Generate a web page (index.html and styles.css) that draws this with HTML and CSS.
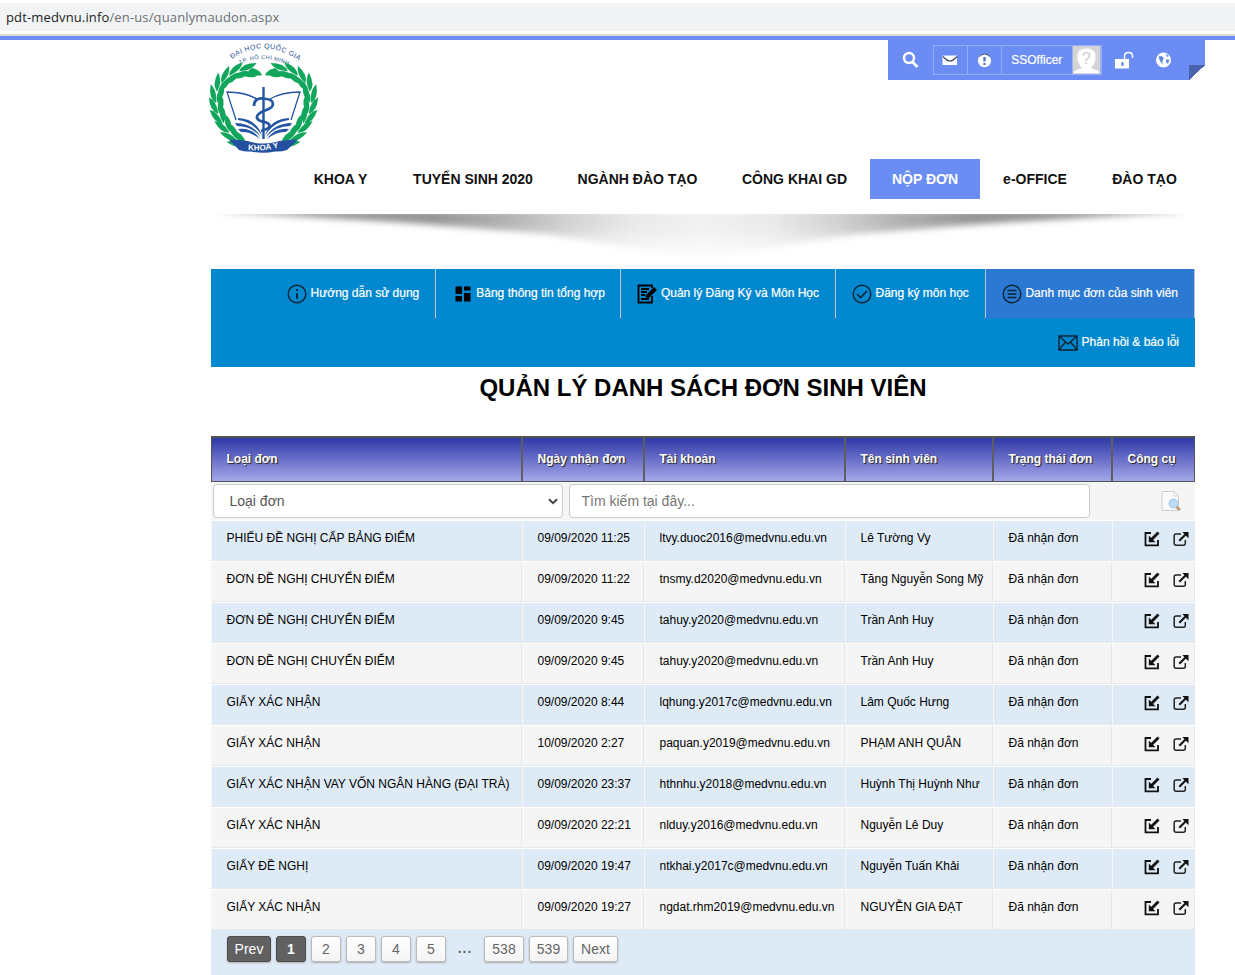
FILE: index.html
```html
<!DOCTYPE html>
<html lang="vi">
<head>
<meta charset="utf-8">
<title>Quản lý danh sách đơn sinh viên</title>
<link rel="stylesheet" href="styles.css">
</head>
<body>
<svg class="defs" aria-hidden="true">
  <symbol id="in" viewBox="0 0 16 16"><path d="M7 2H1.500V14.300H14V9" fill="none" stroke="#111" stroke-width="1.800"/><path d="M14.500 1.500L7 9" stroke="#111" stroke-width="2.800"/><path d="M4.800 4.500V11.200H11.500Z" fill="#111"/></symbol>
  <symbol id="out" viewBox="0 0 16 16"><path d="M8 3H3Q1.200 3 1.200 4.800V12.500Q1.200 14.200 3 14.200H10.500Q12.300 14.200 12.300 12.500V9" fill="none" stroke="#222" stroke-width="1.500"/><path d="M6.300 9.700L12.500 3.500" stroke="#111" stroke-width="2"/><path d="M9.300 1H15.500V7.200Z" fill="#111"/></symbol>
</svg>
<div class="address"><span class="host">pdt-medvnu.info</span>/en-us/quanlymaudon.aspx</div>
<div class="page">
  <header class="top">
    <svg class="logo" width="120" height="118" viewBox="0 0 120 118">
      <defs>
        <path id="arc1" d="M29 19Q60 -3 95 20"/>
        <path id="arc2" d="M37 24.500Q60 13 86 25.500"/>
        <path id="arc3" d="M45 110Q60 111.500 77 107.500"/>
        <g id="pair" fill="#12a65c"><path d="M-2 0Q2-8 16-7Q11 0 0 0Z"/><path d="M-2 1Q8-2 16 6Q6 9.500-2 1Z"/></g>
        <g id="branch">
          <use href="#pair" transform="translate(41 104) rotate(-150)"/>
          <use href="#pair" transform="translate(33 99) rotate(-134)"/>
          <use href="#pair" transform="translate(25.500 91) rotate(-121)"/>
          <use href="#pair" transform="translate(19 82) rotate(-112)"/>
          <use href="#pair" transform="translate(15 72) rotate(-98)"/>
          <use href="#pair" transform="translate(13 61) rotate(-84)"/>
          <use href="#pair" transform="translate(15 50) rotate(-66)"/>
          <use href="#pair" transform="translate(20 42) rotate(-46)"/>
          <use href="#pair" transform="translate(28 35) rotate(-24)"/>
          <use href="#pair" transform="translate(38 31) rotate(-4)"/>
          <path d="M49 28Q57 30 59 35Q52 37 45 31Z" fill="#12a65c"/>
        </g>
      </defs>
      <text class="logo-text"><textPath href="#arc1" textLength="72">ĐẠI HỌC QUỐC GIA</textPath></text>
      <text class="logo-text small"><textPath href="#arc2" textLength="50">TP. HỒ CHÍ MINH</textPath></text>
      <use href="#branch"/><use href="#branch" transform="matrix(-1 0 0 1 121 0)"/>
      <g fill="none" stroke="#2454a3" stroke-width="1.300">
        <path d="M33 80L24 52Q42 52 54 59M88 80L97 52Q79 52 67 59"/>
      </g>
      <g fill="#2454a3">
        <path d="M35 78Q54 79 59 96Q51 82 35 80Z"/><path d="M86 78Q67 79 62 96Q70 82 86 80Z"/>
        <path d="M32 83Q50 83 58 97Q48 86 34 86Z"/><path d="M89 83Q71 83 63 97Q73 86 87 86Z"/>
        <path d="M35 89Q49 87 57 99Q47 91 38 92Z"/><path d="M86 89Q72 87 64 99Q74 91 83 92Z"/>
      </g>
      <g fill="none" stroke="#2454a3">
        <path d="M60.500 47V99" stroke-width="2.400"/>
        <path d="M51 66Q51 58 60 58.500Q70 59 70 64Q70 68 62 70.500Q53 74 54 78Q55 81 62 82Q68 84 66 87Q65 89 58 91" stroke-width="2.700"/>
      </g>
      <path d="M26 99.500Q43 100 48 102Q60 105 73 102Q78 100 95 99.500L84 110Q78 112 72 111.500Q60 114 48 111.500Q42 112 36 110Z" fill="#23509f"/>
      <text class="logo-name"><textPath href="#arc3" textLength="31">KHOA Y</textPath></text>
    </svg>
    <div class="tools">
      <svg class="search" width="18" height="18" viewBox="0 0 18 18"><circle cx="7" cy="7" r="5" fill="none" stroke="#fff" stroke-width="2.400"/><path d="M10.500 11L15.500 16" stroke="#fff" stroke-width="2.800"/></svg>
      <div class="box">
        <span class="cell"><svg width="16" height="12" viewBox="0 0 16 12"><path d="M.5 1.500H15V11H.5Z" fill="#fff"/><path d="M1 2.500Q5 7 8 7Q11 7 15 2.500" fill="none" stroke="#35405c" stroke-width="1.200"/></svg></span>
        <span class="cell"><svg width="16" height="16" viewBox="0 0 16 16"><circle cx="8.500" cy="8.700" r="6.600" fill="#fff"/><path d="M3.500 4.500Q8.500-.5 13.500 4.500" fill="none" stroke="#41507a"/><path d="M8.500 5V9.500M8.500 11V13" stroke="#506fc5" stroke-width="2.300"/></svg></span>
        <span class="user">SSOfficer</span>
        <svg class="avatar" width="29" height="28" viewBox="0 0 29 29"><path fill="#d4d4d4" d="M0 0H29V29H0Z"/><path d="M1 28Q3 24 10 23Q5 18 5 11Q5 2.500 14.500 2.500Q24 2.500 24 11Q24 18 19 23Q26 24 28 28Z" fill="#fff"/><text x="9.500" y="18.500" font-size="17" fill="#ccc">?</text></svg>
      </div>
      <svg class="lock" width="20" height="18" viewBox="0 0 20 18"><path d="M0 8H14V17.500H0Z" fill="#fff"/><path d="M9.500 8V5Q9.500 1.500 13.500 1.500Q17.500 1.500 17.500 5V7" fill="none" stroke="#fff" stroke-width="1.400"/><path d="M7.500 11V15" stroke="#587bdd" stroke-width="2"/></svg>
      <svg class="globe" width="16" height="16" viewBox="0 0 16 16"><circle cx="7.500" cy="8" r="7.500" fill="#fff"/><path d="M2.500 4.500L5.500 4L8 6L6.500 8.500L6.500 12.500L4 9ZM9.500 1.500L13 4L11 5ZM10 7.500L13.500 7.500L12 12L10 10Z" fill="#6287e7"/></svg>
      <span class="fold"></span>
    </div>
  </header>
  <nav class="menu">
    <a>KHOA Y</a><a>TUYỂN SINH 2020</a><a>NGÀNH ĐÀO TẠO</a><a>CÔNG KHAI GD</a><a class="on">NỘP ĐƠN</a><a>e-OFFICE</a><a>ĐÀO TẠO</a>
  </nav>
  <svg class="shade" width="984" height="55" viewBox="0 0 984 55">
    <defs>
      <linearGradient id="sg"><stop offset="0" stop-color="#777" stop-opacity=".5"/><stop offset=".1" stop-color="#777" stop-opacity=".8"/><stop offset=".22" stop-color="#777" stop-opacity=".8"/><stop offset=".3" stop-color="#808080" stop-opacity=".62"/><stop offset=".36" stop-color="#888" stop-opacity=".4"/><stop offset=".43" stop-color="#999" stop-opacity=".22"/><stop offset=".5" stop-color="#999" stop-opacity=".15"/><stop offset=".57" stop-color="#999" stop-opacity=".22"/><stop offset=".64" stop-color="#888" stop-opacity=".4"/><stop offset=".7" stop-color="#808080" stop-opacity=".62"/><stop offset=".78" stop-color="#777" stop-opacity=".8"/><stop offset=".9" stop-color="#777" stop-opacity=".8"/><stop offset="1" stop-color="#777" stop-opacity=".5"/></linearGradient>
      <linearGradient id="vm" x2="0" y2="1"><stop offset="0" stop-color="#fff"/><stop offset=".3" stop-color="#ddd"/><stop offset="1" stop-color="#000"/></linearGradient>
      <mask id="sm"><path d="M0 0H984V50H0Z" fill="url(#vm)"/></mask>
      <filter id="sb" x="-5%" y="-50%" width="110%" height="200%"><feGaussianBlur stdDeviation="6 3"/></filter>
    </defs>
    <g mask="url(#sm)"><path d="M14-3V-1Q180 6 340 21Q420 34 491 46Q562 34 642 21Q802 6 968-1V-3Z" fill="url(#sg)" filter="url(#sb)"/></g>
  </svg>
  <nav class="sub">
    <a class="far"><svg width="20" height="20" viewBox="0 0 20 20"><circle cx="10" cy="10" r="8.800"/><path d="M10 9V15M10 5V7" stroke-width="1.800"/></svg>Hướng dẫn sử dụng</a>
    <a class="shift"><svg width="20" height="20" viewBox="0 0 20 20"><path d="M2.500 2.500H9V10H2.500ZM11 2.500H17.500V6.500H11ZM2.500 12H9V17.500H2.500ZM11 9H17.500V17.500H11Z" fill="#000" stroke="none"/></svg>Bảng thông tin tổng hợp</a>
    <a class="wide far"><svg width="20" height="20" viewBox="0 0 20 20"><path d="M15 12V18.500H1.500V1.500H15V4M4 5H12M4 8H10M4 11H8M4 15H12" stroke="#000" stroke-width="1.800"/><path d="M9.500 13.500L18.500 4.500" stroke="#000" stroke-width="4"/></svg>Quản lý Đăng Ký và Môn Học</a>
    <a class="wide"><svg width="20" height="20" viewBox="0 0 20 20"><circle cx="10" cy="10" r="8.800"/><path d="M5 10L8.500 13.500L15 7" stroke-width="1.600"/></svg>Đăng ký môn học</a>
    <a class="on"><svg width="20" height="20" viewBox="0 0 20 20"><circle cx="10" cy="10" r="8.800"/><path d="M5.500 6.500H14.500M5.500 10H14.500M5.500 13.500H14.500" stroke-width="1.600"/></svg>Danh mục đơn của sinh viên</a>
    <a class="last far"><svg width="20" height="20" viewBox="0 0 20 20"><path d="M1 3H19V17H1ZM1 3L10 11L19 3M1 17L7.500 9M19 17L12.500 9"/></svg>Phản hồi &amp; báo lỗi</a>
  </nav>
  <h1>QUẢN LÝ DANH SÁCH ĐƠN SINH VIÊN</h1>
  <div class="row head"><b>Loại đơn</b><b>Ngày nhận đơn</b><b>Tài khoản</b><b>Tên sinh viên</b><b>Trạng thái đơn</b><b>Công cụ</b></div>
  <div class="filter">
    <div class="field select">Loại đơn<svg width="10" height="7" viewBox="0 0 10 7"><path d="M1 1.200L5 5.200L9 1.200" fill="none" stroke="#444" stroke-width="2"/></svg></div>
    <div class="field query">Tìm kiếm tại đây...</div>
    <span class="find"><svg width="20" height="20" viewBox="0 0 20 20"><path d="M1 .5H13L17.500 5V19.500H1Z" fill="#fafafa" stroke="#c9cdd1"/><path d="M13 .5V5H17.500" fill="none" stroke="#d5d8db"/><circle cx="12.500" cy="12.500" r="4.500" fill="#b9dcf5" stroke="#a4c6e4"/><path d="M15.500 16L19 19" stroke="#bd9468" stroke-width="2.500"/></svg></span>
  </div>
  <div class="row"><span>PHIẾU ĐỀ NGHỊ CẤP BẢNG ĐIỂM</span><span>09/09/2020 11:25</span><span>ltvy.duoc2016@medvnu.edu.vn</span><span>Lê Tường Vy</span><span>Đã nhận đơn</span><span class="acts"><svg><use href="#in"/></svg><svg><use href="#out"/></svg></span></div>
  <div class="row"><span>ĐƠN ĐỀ NGHỊ CHUYỂN ĐIỂM</span><span>09/09/2020 11:22</span><span>tnsmy.d2020@medvnu.edu.vn</span><span>Tăng Nguyễn Song Mỹ</span><span>Đã nhận đơn</span><span class="acts"><svg><use href="#in"/></svg><svg><use href="#out"/></svg></span></div>
  <div class="row"><span>ĐƠN ĐỀ NGHỊ CHUYỂN ĐIỂM</span><span>09/09/2020 9:45</span><span>tahuy.y2020@medvnu.edu.vn</span><span>Trần Anh Huy</span><span>Đã nhận đơn</span><span class="acts"><svg><use href="#in"/></svg><svg><use href="#out"/></svg></span></div>
  <div class="row"><span>ĐƠN ĐỀ NGHỊ CHUYỂN ĐIỂM</span><span>09/09/2020 9:45</span><span>tahuy.y2020@medvnu.edu.vn</span><span>Trần Anh Huy</span><span>Đã nhận đơn</span><span class="acts"><svg><use href="#in"/></svg><svg><use href="#out"/></svg></span></div>
  <div class="row"><span>GIẤY XÁC NHẬN</span><span>09/09/2020 8:44</span><span>lqhung.y2017c@medvnu.edu.vn</span><span>Lâm Quốc Hưng</span><span>Đã nhận đơn</span><span class="acts"><svg><use href="#in"/></svg><svg><use href="#out"/></svg></span></div>
  <div class="row"><span>GIẤY XÁC NHẬN</span><span>10/09/2020 2:27</span><span>paquan.y2019@medvnu.edu.vn</span><span>PHẠM ANH QUÂN</span><span>Đã nhận đơn</span><span class="acts"><svg><use href="#in"/></svg><svg><use href="#out"/></svg></span></div>
  <div class="row"><span>GIẤY XÁC NHẬN VAY VỐN NGÂN HÀNG (ĐẠI TRÀ)</span><span>09/09/2020 23:37</span><span>hthnhu.y2018@medvnu.edu.vn</span><span>Huỳnh Thị Huỳnh Như</span><span>Đã nhận đơn</span><span class="acts"><svg><use href="#in"/></svg><svg><use href="#out"/></svg></span></div>
  <div class="row"><span>GIẤY XÁC NHẬN</span><span>09/09/2020 22:21</span><span>nlduy.y2016@medvnu.edu.vn</span><span>Nguyễn Lê Duy</span><span>Đã nhận đơn</span><span class="acts"><svg><use href="#in"/></svg><svg><use href="#out"/></svg></span></div>
  <div class="row"><span>GIẤY ĐỀ NGHỊ</span><span>09/09/2020 19:47</span><span>ntkhai.y2017c@medvnu.edu.vn</span><span>Nguyễn Tuấn Khải</span><span>Đã nhận đơn</span><span class="acts"><svg><use href="#in"/></svg><svg><use href="#out"/></svg></span></div>
  <div class="row"><span>GIẤY XÁC NHẬN</span><span>09/09/2020 19:27</span><span>ngdat.rhm2019@medvnu.edu.vn</span><span>NGUYỄN GIA ĐẠT</span><span>Đã nhận đơn</span><span class="acts"><svg><use href="#in"/></svg><svg><use href="#out"/></svg></span></div>
  <div class="pager"><a class="dark w44">Prev</a><a class="dark cur">1</a><a>2</a><a>3</a><a>4</a><a>5</a><i>...</i><a class="w40">538</a><a class="w39">539</a><a class="w45">Next</a></div>
</div>
</body>
</html>
```
FILE: styles.css
```css
* { box-sizing: border-box; }
body { margin: 0; height: 975px; overflow: hidden; background: #fff; color: #000; font-family: "Liberation Sans", Arial, sans-serif; font-size: 12px; }
.defs { display: none; }
.address { height: 40px; padding: 6px 6px 0; border-bottom: 4px solid #6b8cf2; font: 13px/23px "Open Sans", "Noto Sans", sans-serif; letter-spacing: .14px; color: #6c7074; background: linear-gradient(#fff 3px, #f1f3f4 3px, #f1f3f4 31px, #fff 31px, #fff 34px, #dcdcdc 34px); }
.host { color: #222; }
.page { width: 984px; margin-left: 211px; }
.top { display: flex; justify-content: space-between; height: 119px; margin: 0 -10px 0 -8px; }
.logo { display: block; }
.logo-text { font: 7px "Liberation Sans", sans-serif; fill: #2c5196; }
.logo-text.small { font-size: 5.5px; }
.logo-name { font: bold 8px "Liberation Sans", sans-serif; fill: #fff; }
.tools { position: relative; display: flex; width: 317px; height: 40px; background: #6b8cf2; color: #fff; }
.search { margin: 11px 0 0 14px; }
.box { display: flex; width: 169px; height: 30px; margin: 5px 0 0 13px; border: 1px solid #92adfb; }
.cell { display: flex; align-items: center; justify-content: center; width: 34px; border-right: 1px solid #92adfb; }
.user { width: 71px; text-align: center; line-height: 28px; -webkit-text-stroke: .2px #fff; }
.avatar { flex: none; width: 29px; height: 28px; }
.lock { margin: 11px 0 0 13px; }
.globe { margin: 12px 0 0 21px; }
.fold { position: absolute; right: 0; bottom: 0; width: 16px; height: 15px; background: linear-gradient(137deg, #4a61ab 50%, #fff 51%); }
.menu { display: grid; grid-template-columns: 99px 166px 163px 151px 110px 110px 109px; height: 40px; margin: 0 -5px 0 80px; font-weight: bold; font-size: 14px; color: #111; }
.menu a { display: flex; align-items: center; justify-content: center; white-space: nowrap; }
.menu .on { background: #6b8cf2; color: #fff; }
.shade { display: block; margin-top: 15px; }
.sub { display: flex; flex-wrap: wrap; justify-content: flex-end; height: 98px; background: #0288cf; color: #fff; }
.sub a { display: flex; align-items: flex-start; gap: 3px; height: 49px; padding: 15px 16px 0 16px; border-right: 1px solid #bfc5ce; line-height: 18px; white-space: nowrap; -webkit-text-stroke: .2px #fff; }
.sub svg { flex: none; fill: none; stroke: #0b2434; stroke-width: 1.4; }
.sub .wide { padding-right: 16.5px; }
.sub .far { gap: 4px; }
.sub .shift { padding: 15px 15px 0 17px; }
.sub .on { background: #2b79d2; }
.sub .last { border: 0; }
h1 { height: 69px; margin: 0; padding-top: 6px; text-align: center; font-size: 24px; line-height: 30px; color: #000; }
.row { display: grid; grid-template-columns: 311px 122px 201px 148px 119px 83px; height: 41px; background: #f5f5f5; border-top: 1px solid #fff; border-bottom: 1px solid #e6e8ea; }
.row:nth-child(even) { background: #deebf7; }
.row span { border-left: 1px solid #f5f8fa; border-right: 1px solid #e4e7ea; padding: 9px 0 0 14.5px; line-height: 16px; white-space: nowrap; }
.row .acts { display: flex; padding: 10px 0 0 31px; gap: 13px; }
.acts svg { width: 16px; height: 16px; }
.row.head { height: 46px; border: 1px solid #52544f; border-top: 2px solid #52544f; background: linear-gradient(#303aa7, #7074cb 55%, #a3a8eb); color: #fff; }
.head b { padding-left: 14.5px; line-height: 42px; border-right: 2px solid #5d5f5e; text-shadow: 1px 1px 1px #222; }
.head b:last-child { border: 0; }
.filter { display: flex; height: 38px; padding: 2px; background: #f5f5f5; }
.field { height: 34px; border: 1px solid #ccc; border-radius: 4px; background: #fff; color: #555; font-size: 14px; line-height: 32px; }
.select { display: flex; justify-content: space-between; align-items: center; width: 350px; padding: 0 4px 0 15.5px; }
.query { width: 521px; margin-left: 6px; padding-left: 11.5px; color: #777; }
.find { padding: 7px 0 0 71px; }
.pager { display: flex; gap: 5px; height: 45px; padding: 6px 16px; background: #deebf7; font-size: 14px; color: #666; }
.pager a { width: 30px; height: 26px; border: 1px solid #bbb; border-radius: 3px; background: linear-gradient(#fff, #f3f3f3); box-shadow: 0 1px 2px #aaa; text-align: center; line-height: 24px; }
.pager .dark { background: #616161; color: #fff; border-color: #4c4c4c; }
.pager .cur { font-weight: bold; }
.pager .w44 { width: 44px; }
.pager .w40 { width: 40px; }
.pager .w39 { width: 39px; }
.pager .w45 { width: 45px; }
.pager i { width: 28px; text-align: center; line-height: 24px; font-style: normal; font-weight: bold; letter-spacing: 1px; }
```
